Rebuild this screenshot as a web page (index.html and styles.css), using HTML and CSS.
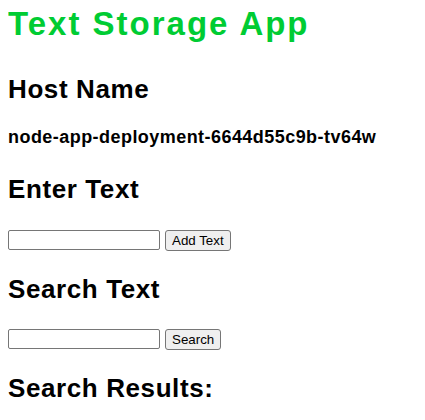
FILE: index.html
```html
<!DOCTYPE html>
<html lang="en">
<head>
    <meta charset="UTF-8">
    <meta name="viewport" content="width=device-width, initial-scale=1.0">
    <title>Text Storage App</title>
    <link rel="stylesheet" href="styles.css">
</head>
<body>
    <h1 class="app-title">Text Storage App</h1>

    <!-- Host -->
    <h2 class="section-title first">Host Name</h2>
    <p class="host-name">node-app-deployment-6644d55c9b-tv64w</p>

    <!-- Add -->
    <h2 class="section-title">Enter Text</h2>
    <div class="field-row">
        <input type="text" class="text-input" id="textInput">
        <button class="btn" onclick="addText()">Add Text</button>
    </div>

    <!-- Search -->
    <h2 class="section-title tight">Search Text</h2>
    <div class="field-row">
        <input type="text" class="text-input" id="searchInput">
        <button class="btn" onclick="searchText()">Search</button>
    </div>

    <h2 class="section-title tight">Search Results:</h2>
    <ul class="results" id="results"></ul>
</body>
</html>
```

FILE: styles.css
```css
* {
    box-sizing: border-box;
}

body {
    margin: 0 8px;
    font-family: 'Liberation Sans', Arial, sans-serif;
    color: #000;
    background-color: #fff;
}

.app-title {
    margin: 5px 0 0;
    font-size: 33px;
    line-height: 38px;
    font-weight: bold;
    letter-spacing: 2px;
    color: #00cc33;
}

.section-title {
    margin: 26px 0 0;
    font-size: 26px;
    line-height: 30px;
    font-weight: bold;
    letter-spacing: 0.6px;
}

.section-title.first {
    margin-top: 31px;
}

.section-title.tight {
    margin-top: 23px;
}

.host-name {
    margin: 23px 0 0;
    font-size: 18px;
    line-height: 21px;
    font-weight: bold;
    letter-spacing: 0.45px;
}

.field-row {
    display: flex;
    align-items: flex-start;
    gap: 5px;
    margin-top: 26px;
}

.section-title.tight + .field-row {
    margin-top: 25px;
}

.text-input {
    width: 152px;
    height: 20px;
    border: 1px solid #767676;
    border-radius: 2px;
    padding: 1px 2px;
    font-size: 13px;
}

.btn {
    height: 21px;
    padding: 1px 6px;
    border: 1px solid #767676;
    border-radius: 3px;
    background-color: #efefef;
    font-family: 'Liberation Sans', Arial, sans-serif;
    font-size: 13.33px;
    color: #000;
}

.results {
    margin: 0;
    padding-left: 40px;
}
```
